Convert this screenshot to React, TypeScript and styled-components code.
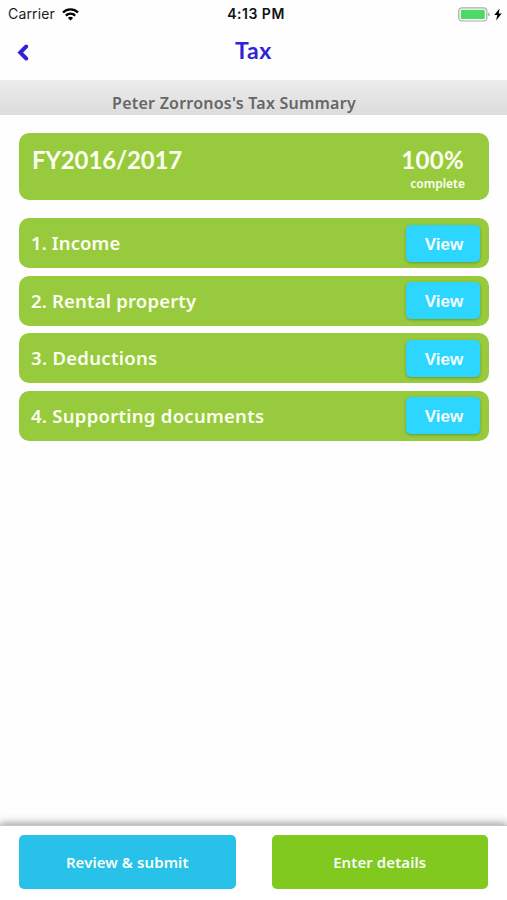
import React from "react";
import styled, { createGlobalStyle } from "styled-components";

const GlobalStyle = createGlobalStyle`
  * { box-sizing: border-box; }
  body { margin: 0; background: #fff; }
  button { border: 0; padding: 0; margin: 0; cursor: pointer; background: none; }
  h1, h2, p { margin: 0; }
`;

const Screen = styled.div`
  display: flex;
  flex-direction: column;
  width: 100%;
  height: 900px;
  overflow: hidden;
  background: #fefefe;
  font-family: "Noto Sans", "Open Sans", sans-serif;
`;

const StatusBar = styled.div`
  display: grid;
  grid-template-columns: 1fr auto 1fr;
  align-items: center;
  height: 27px;
  padding: 0 5px 0 8px;
  font-family: Inter, sans-serif;
  font-size: 14px;
  line-height: 28px;
  color: #1c1c1c;
`;

const StatusSide = styled.div<{ $end?: boolean }>`
  display: flex;
  align-items: center;
  justify-content: ${(p) => (p.$end ? "flex-end" : "flex-start")};
  gap: ${(p) => (p.$end ? "4px" : "7px")};
`;

const Carrier = styled.span`
  letter-spacing: 0.15px;
`;

const Clock = styled.span`
  font-weight: 600;
  letter-spacing: 0.5px;
  padding-left: 2px;
  color: #111;
`;

const NavBar = styled.header`
  display: grid;
  grid-template-columns: 40px 1fr 40px;
  align-items: center;
  height: 53px;
`;

const BackButton = styled.button`
  display: flex;
  align-items: center;
  padding: 0 0 3px 17px;
  height: 53px;
`;

const Title = styled.h1`
  text-align: center;
  font-family: Lato, sans-serif;
  font-size: 23px;
  line-height: 28px;
  font-weight: 700;
  letter-spacing: 0.7px;
  padding-bottom: 7px;
  color: #3222d6;
`;

const Banner = styled.div`
  display: flex;
  justify-content: center;
  height: 35px;
  padding: 12px 39px 0 0;
  background: linear-gradient(#ececec, #dcdcdc);
`;

const BannerText = styled.h2`
  font-size: 16px;
  line-height: 22px;
  font-weight: 600;
  letter-spacing: 0.23px;
  color: #666;
  white-space: nowrap;
`;

const Content = styled.main`
  flex: 1;
  padding: 18px 18px 0 19px;
`;

const SummaryCard = styled.section`
  display: flex;
  justify-content: space-between;
  height: 67px;
  padding: 12px 24px 0 13px;
  margin-bottom: 18px;
  border-radius: 10px;
  background: #98ca3d;
  color: #fbfff0;
`;

const Figure = styled.p<{ $spacing?: number }>`
  font-family: Lato, sans-serif;
  font-size: 24px;
  line-height: 30px;
  font-weight: 700;
  letter-spacing: ${(p) => p.$spacing ?? 0}px;
`;

const Progress = styled.div`
  display: flex;
  flex-direction: column;
  align-items: flex-end;
`;

const Percent = styled(Figure)`
  padding-right: 1px;
`;

const ProgressCaption = styled.p`
  margin-top: 1px;
  font-size: 12px;
  line-height: 16px;
  font-weight: 600;
`;

const SectionList = styled.div`
  display: flex;
  flex-direction: column;
  gap: 7.5px;
`;

const SectionRow = styled.div`
  display: flex;
  align-items: center;
  justify-content: space-between;
  height: 50px;
  padding: 0 9px 0 12px;
  border-radius: 10px;
  background: #98ca3d;
`;

const SectionLabel = styled.span<{ $spacing: number }>`
  font-size: 18.5px;
  line-height: 24px;
  font-weight: 600;
  letter-spacing: ${(p) => p.$spacing}px;
  color: #fbfff0;
`;

const ViewButton = styled.button`
  width: 74px;
  height: 37px;
  border-radius: 5px;
  background: #2cd6ff;
  box-shadow: 0 1px 3px rgba(40, 90, 30, 0.45);
  color: #f4feff;
  font: 700 17px/39px "Liberation Sans", sans-serif;
  padding-left: 2px;
`;

const Footer = styled.footer`
  display: flex;
  gap: 36px;
  height: 75px;
  padding: 9px 19px 0;
  background: #fff;
  border-top: 1px solid #c8c8c8;
  box-shadow: 0 0 9px 1px rgba(0, 0, 0, 0.45);
`;

const ActionButton = styled.button<{ $color: string }>`
  flex: 1;
  height: 54px;
  border-radius: 5px;
  background: ${(p) => p.$color};
  color: #f4fff8;
  font: 600 15px/55px "Noto Sans", sans-serif;
  letter-spacing: 0.08px;
`;

const sections = [
  { label: "1. Income", spacing: 0.1 },
  { label: "2. Rental property", spacing: 0.18 },
  { label: "3. Deductions", spacing: 0.3 },
  { label: "4. Supporting documents", spacing: 0.27 },
];

const WifiIcon = () => (
  <svg width="17" height="13" viewBox="0 0 17 13" fill="none" stroke="#000" strokeWidth="2.3">
    <path d="M1 4.5a10.8 10.8 0 0 1 15 0" />
    <path d="M3.8 7.6a6.8 6.8 0 0 1 9.4 0" />
    <path d="M8.5 12.4 5.9 9.9a3.8 3.8 0 0 1 5.2 0z" fill="#000" stroke="none" />
  </svg>
);

const BatteryIcon = () => (
  <svg width="32" height="15" viewBox="0 0 32 15">
    <rect x="0.8" y="0.8" width="28" height="13.2" rx="3.2" fill="#fff" stroke="#aaa" strokeWidth="1.2" />
    <rect x="2.8" y="2.8" width="24" height="9.2" rx="1" fill="#4cd964" />
    <path d="M30.2 5.2q1.6.7 1.6 2.2t-1.6 2.2z" fill="#aaa" />
  </svg>
);

const BoltIcon = () => (
  <svg width="8" height="13" viewBox="0 0 8 13">
    <path d="M5.6.6.3 7.1h3L2.1 12.4 7.7 5.6h-3z" fill="#000" />
  </svg>
);

const BackIcon = () => (
  <svg width="12" height="17" viewBox="0 0 12 17" fill="none">
    <path d="M9.2 2.5 3.2 8.5l6 6" stroke="#3222d6" strokeWidth="3.9" strokeLinecap="round" />
  </svg>
);

export default function App() {
  return (
    <Screen>
      <GlobalStyle />
      <StatusBar>
        <StatusSide>
          <Carrier>Carrier</Carrier>
          <WifiIcon />
        </StatusSide>
        <Clock>4:13 PM</Clock>
        <StatusSide $end>
          <BatteryIcon />
          <BoltIcon />
        </StatusSide>
      </StatusBar>
      <NavBar>
        <BackButton aria-label="Back">
          <BackIcon />
        </BackButton>
        <Title>Tax</Title>
      </NavBar>
      <Banner>
        <BannerText>Peter Zorronos's Tax Summary</BannerText>
      </Banner>
      <Content>
        <SummaryCard>
          <Figure $spacing={-0.15}>FY2016/2017</Figure>
          <Progress>
            <Percent $spacing={0.3}>100%</Percent>
            <ProgressCaption>complete</ProgressCaption>
          </Progress>
        </SummaryCard>
        <SectionList>
          {sections.map((s) => (
            <SectionRow key={s.label}>
              <SectionLabel $spacing={s.spacing}>{s.label}</SectionLabel>
              <ViewButton>View</ViewButton>
            </SectionRow>
          ))}
        </SectionList>
      </Content>
      <Footer>
        <ActionButton $color="#27c1e9">Review &amp; submit</ActionButton>
        <ActionButton $color="#82c91f">Enter details</ActionButton>
      </Footer>
    </Screen>
  );
}
